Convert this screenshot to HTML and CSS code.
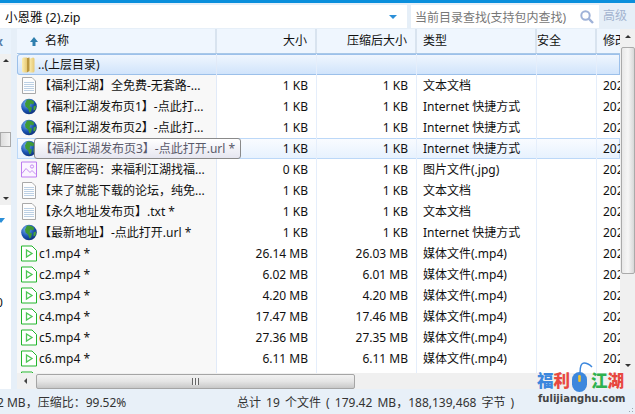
FILE: index.html
```html
<!DOCTYPE html>
<html lang="zh-CN">
<head>
  <meta charset="UTF-8" />
  <title>小恩雅 (2).zip</title>
  <link rel="stylesheet" href="styles.css">
</head>
<body>
  <svg class="defs" width="0" height="0">
    <defs>
      <linearGradient id="folderGrad" x1="0" y1="0" x2="1" y2="0">
        <stop offset="0" stop-color="#fbeeb4"/><stop offset="1" stop-color="#e6c873"/>
      </linearGradient>
      <radialGradient id="globeGrad" cx="0.35" cy="0.3" r="0.8">
        <stop offset="0" stop-color="#7db4f2"/><stop offset="0.55" stop-color="#1c56b4"/><stop offset="1" stop-color="#0b2a70"/>
      </radialGradient>
      <symbol id="i-folder" viewBox="0 0 13 16">
        <path d="M0 2 Q0 .5 1.5 .5 L5 .5 L5 15.5 L1.5 15.5 Q0 15.5 0 14 Z" fill="url(#folderGrad)"/>
        <path d="M7 2 L11 .5 Q12.5 .5 12.5 2 L12.5 14 Q12.5 15.5 11 15.5 L7 15.5 Z" fill="url(#folderGrad)"/>
        <path d="M5 1 L7.5 .5 L7.5 14 L5 15.5 Z" fill="#b9963f"/>
      </symbol>
      <symbol id="i-text" viewBox="0 0 14 17">
        <path d="M.5.5 H10 L13.5 4 V16.5 H.5 Z" fill="#fdfdfd" stroke="#a9a9a9"/>
        <path d="M2 5.5 H12 M2 7.5 H12 M2 9.5 H12 M2 11.5 H12 M2 13.5 H12" stroke="#bcd0e4"/>
      </symbol>
      <symbol id="i-globe" viewBox="0 0 16 16">
        <circle cx="8" cy="8" r="7.8" fill="url(#globeGrad)"/>
        <path d="M6 1 Q10 .5 13 3 L12.5 6 L9.5 5 L8.5 8 L11 9 L10 13 L8.5 14 L7 10 L4.5 8 L4 5 Z" fill="#3f9a35"/>
        <path d="M12.5 8 L15 7 L14.5 11 L12.5 12 Z" fill="#4aa63c"/>
      </symbol>
      <symbol id="i-image" viewBox="0 0 16 16">
        <path d="M.5.5 H15.5 V15.5 H.5 Z" fill="#fbf5ff" stroke="#bd7cf0"/>
        <path d="M1 12 L5 7 L9 11 L11 9 L15 13" fill="none" stroke="#c48cf2"/>
        <circle cx="11" cy="5" r="1.6" fill="none" stroke="#c48cf2"/>
      </symbol>
      <symbol id="i-video" viewBox="0 0 16 16">
        <path d="M.5.5 H11 L15.5 5 V15.5 H.5 Z" fill="#fff" stroke="#22b52c"/>
        <path d="M5.5 4.5 L11 8 L5.5 11.5 Z" fill="#fff" stroke="#4cc654" stroke-width="1.3"/>
      </symbol>
    </defs>
  </svg>

  <div class="window">
    <div class="topbar">
      <div class="pathbox">
        <span>小恩雅 (2).zip</span>
        <i class="caret"></i>
      </div>
      <div class="searchbox">
        <span>当前目录查找(支持包内查找)</span>
        <svg class="magnifier" width="14" height="14" viewBox="0 0 14 14">
          <circle cx="5.5" cy="5.5" r="4.2" fill="none" stroke="#9fb2d8" stroke-width="2"/>
          <path d="M8.7 8.7 L13 13" stroke="#9fb2d8" stroke-width="2.4"/>
        </svg>
      </div>
      <span class="advanced">高级</span>
    </div>

    <div class="main">
      <div class="side">
        <div class="side-head"><span class="side-x">x</span></div>
        <div class="side-scroll">
          <i class="tri-up"></i>
          <div class="side-thumb"></div>
          <i class="tri-down"></i>
        </div>
        <div class="side-tree">
          <i class="side-arrow"></i>
          <span class="zero">0</span>
        </div>
      </div>

      <div class="content">
        <div class="content-top">
          <div class="list">
            <div class="row head">
              <div class="cell name">
                <svg class="sort" width="8" height="9" viewBox="0 0 8 9"><path d="M4 0 L8 5 L5.5 5 L5.5 9 L2.5 9 L2.5 5 L0 5 Z" fill="#2f7fae"/></svg>
                名称
              </div>
              <div class="cell size">大小</div>
              <div class="cell packed">压缩后大小</div>
              <div class="cell kind">类型</div>
              <div class="cell safe">安全</div>
              <div class="cell date">修改</div>
            </div>

            <div class="row selected">
              <div class="cell name"><svg class="ico folder"><use href="#i-folder"/></svg><span>..(上层目录)</span></div>
              <div class="cell size"></div><div class="cell packed"></div><div class="cell kind"></div><div class="cell safe"></div><div class="cell date"></div>
            </div>
            <div class="row">
              <div class="cell name"><svg class="ico"><use href="#i-text"/></svg>【福利江湖】全免费-无套路-...</div>
              <div class="cell size">1 KB</div><div class="cell packed">1 KB</div><div class="cell kind">文本文档</div><div class="cell safe"></div><div class="cell date">2021</div>
            </div>
            <div class="row">
              <div class="cell name"><svg class="ico"><use href="#i-globe"/></svg>【福利江湖发布页1】-点此打...</div>
              <div class="cell size">1 KB</div><div class="cell packed">1 KB</div><div class="cell kind">Internet 快捷方式</div><div class="cell safe"></div><div class="cell date">2021</div>
            </div>
            <div class="row">
              <div class="cell name"><svg class="ico"><use href="#i-globe"/></svg>【福利江湖发布页2】-点此打...</div>
              <div class="cell size">1 KB</div><div class="cell packed">1 KB</div><div class="cell kind">Internet 快捷方式</div><div class="cell safe"></div><div class="cell date">2021</div>
            </div>
            <div class="row hover">
              <div class="cell name"><svg class="ico"><use href="#i-globe"/></svg></div>
              <div class="cell size">1 KB</div><div class="cell packed">1 KB</div><div class="cell kind">Internet 快捷方式</div><div class="cell safe"></div><div class="cell date">2021</div>
            </div>
            <div class="row">
              <div class="cell name"><svg class="ico"><use href="#i-image"/></svg>【解压密码：来福利江湖找福...</div>
              <div class="cell size">0 KB</div><div class="cell packed">1 KB</div><div class="cell kind">图片文件(.jpg)</div><div class="cell safe"></div><div class="cell date">2021</div>
            </div>
            <div class="row">
              <div class="cell name"><svg class="ico"><use href="#i-text"/></svg>【来了就能下载的论坛，纯免...</div>
              <div class="cell size">1 KB</div><div class="cell packed">1 KB</div><div class="cell kind">文本文档</div><div class="cell safe"></div><div class="cell date">2021</div>
            </div>
            <div class="row">
              <div class="cell name"><svg class="ico"><use href="#i-text"/></svg>【永久地址发布页】.txt *</div>
              <div class="cell size">1 KB</div><div class="cell packed">1 KB</div><div class="cell kind">文本文档</div><div class="cell safe"></div><div class="cell date">2021</div>
            </div>
            <div class="row">
              <div class="cell name"><svg class="ico"><use href="#i-globe"/></svg>【最新地址】-点此打开.url *</div>
              <div class="cell size">1 KB</div><div class="cell packed">1 KB</div><div class="cell kind">Internet 快捷方式</div><div class="cell safe"></div><div class="cell date">2021</div>
            </div>
            <div class="row">
              <div class="cell name"><svg class="ico"><use href="#i-video"/></svg>c1.mp4 *</div>
              <div class="cell size">26.14 MB</div><div class="cell packed">26.03 MB</div><div class="cell kind">媒体文件(.mp4)</div><div class="cell safe"></div><div class="cell date">2021</div>
            </div>
            <div class="row">
              <div class="cell name"><svg class="ico"><use href="#i-video"/></svg>c2.mp4 *</div>
              <div class="cell size">6.02 MB</div><div class="cell packed">6.01 MB</div><div class="cell kind">媒体文件(.mp4)</div><div class="cell safe"></div><div class="cell date">2021</div>
            </div>
            <div class="row">
              <div class="cell name"><svg class="ico"><use href="#i-video"/></svg>c3.mp4 *</div>
              <div class="cell size">4.20 MB</div><div class="cell packed">4.20 MB</div><div class="cell kind">媒体文件(.mp4)</div><div class="cell safe"></div><div class="cell date">2021</div>
            </div>
            <div class="row">
              <div class="cell name"><svg class="ico"><use href="#i-video"/></svg>c4.mp4 *</div>
              <div class="cell size">17.47 MB</div><div class="cell packed">17.46 MB</div><div class="cell kind">媒体文件(.mp4)</div><div class="cell safe"></div><div class="cell date">2021</div>
            </div>
            <div class="row">
              <div class="cell name"><svg class="ico"><use href="#i-video"/></svg>c5.mp4 *</div>
              <div class="cell size">27.36 MB</div><div class="cell packed">27.35 MB</div><div class="cell kind">媒体文件(.mp4)</div><div class="cell safe"></div><div class="cell date">2021</div>
            </div>
            <div class="row">
              <div class="cell name"><svg class="ico"><use href="#i-video"/></svg>c6.mp4 *</div>
              <div class="cell size">6.11 MB</div><div class="cell packed">6.11 MB</div><div class="cell kind">媒体文件(.mp4)</div><div class="cell safe"></div><div class="cell date">2021</div>
            </div>
            <div class="row">
              <div class="cell name"><svg class="ico"><use href="#i-video"/></svg></div>
              <div class="cell size"></div><div class="cell packed"></div><div class="cell kind"></div><div class="cell safe"></div><div class="cell date"></div>
            </div>
          </div>

          <div class="vscroll">
            <i class="tri-up"></i>
            <div class="vthumb"></div>
            <i class="tri-down"></i>
          </div>
        </div>

        <div class="hscroll">
          <i class="tri-left"></i>
          <div class="hthumb"><span class="grip"></span></div>
        </div>
      </div>
    </div>

    <div class="status">
      <span class="status-left">2 MB，压缩比：99.52%</span>
      <span class="status-right">总计 19 个文件 ( 179.42 MB，188,139,468 字节 )</span>
    </div>

    <div class="tooltip">【福利江湖发布页3】-点此打开.url *</div>

    <div class="watermark">
      <div class="wm-top">
        <span class="wm-blue">福</span><span class="wm-red">利</span>
        <svg class="wm-mouse" width="22" height="30" viewBox="0 0 22 30">
          <path d="M8 11 Q8 1 12 1 Q16 1 20 5" fill="none" stroke="#3c87dd" stroke-width="1.5"/>
          <rect x="0" y="10" width="15" height="20" rx="7.5" fill="#3c87dd"/>
          <rect x="6.2" y="13" width="2.6" height="7" rx="1.3" fill="#f3c52e"/>
        </svg>
        <span class="wm-green">江</span><span class="wm-red">湖</span>
      </div>
      <div class="wm-url">fulijianghu.com</div>
    </div>

    <div class="resize-grip"></div>
  </div>
</body>
</html>
```
FILE: styles.css
```css
* {
  box-sizing: border-box;
}
html, body {
  margin: 0;
  padding: 0;
}
body {
  font-family: "Noto Sans", "Noto Sans CJK SC", sans-serif;
  font-size: 12px;
  color: #111;
  overflow: hidden;
}
.defs {
  position: absolute;
}
.window {
  position: relative;
  width: 635px;
  height: 414px;
  display: flex;
  flex-direction: column;
  background: #e9f0f8;
  overflow: hidden;
}

/* top bar */
.topbar {
  height: 29px;
  flex: none;
  display: flex;
  border-top: 3px solid #0a8fdc;
  padding-top: 2px;
  padding-bottom: 1px;
  background: #e6eff8;
}
.pathbox {
  width: 407px;
  display: flex;
  align-items: center;
  justify-content: space-between;
  background: white;
  padding: 0 10px 0 5px;
  font-size: 12.5px;
}
.caret {
  width: 0;
  height: 0;
  border-left: 4px solid transparent;
  border-right: 4px solid transparent;
  border-top: 4px solid #2b8fd8;
}
.searchbox {
  width: 188px;
  margin-left: 4px;
  display: flex;
  align-items: center;
  justify-content: space-between;
  background: white;
  padding: 0 5px 0 4px;
  color: #777;
}
.magnifier {
  flex: none;
}
.advanced {
  margin-left: 4px;
  line-height: 22px;
  color: #a3b3cf;
}

/* main area */
.main {
  flex: 1;
  min-height: 0;
  display: flex;
}
.side {
  width: 11px;
  flex: none;
  display: flex;
  flex-direction: column;
  background: white;
  overflow: hidden;
}
.side-head {
  height: 25px;
  line-height: 25px;
  background: #eaf3fc;
  flex: none;
  margin-left: -4px;
  color: #5a7fa8;
  font-weight: bold;
}
.side-scroll {
  height: 151px;
  flex: none;
  display: flex;
  flex-direction: column;
  align-items: center;
  background: #f0f0f0;
  padding: 5px 0;
}
.side-thumb {
  width: 11px;
  height: 15px;
  margin-top: 70px;
  background: linear-gradient(90deg, #ddd, #f3f3f3);
  border: 1px solid #aaa;
}
.side-scroll .tri-down {
  margin-top: auto;
}
.side-tree {
  flex: 1;
  display: flex;
  flex-direction: column;
  background: white;
}
.side-arrow {
  width: 0;
  height: 0;
  margin: 13px 0 0 -3px;
  border-left: 4px solid transparent;
  border-right: 4px solid transparent;
  border-top: 5px solid #2b8fd8;
}
.zero {
  margin: 71px 0 0 -4px;
}
.content {
  flex: 1;
  min-width: 0;
  display: flex;
  flex-direction: column;
  margin-left: 6px;
  box-shadow: -6px 0 0 #e6eff8;
}
.content-top {
  flex: 1;
  min-height: 0;
  display: flex;
}
.list {
  flex: 1;
  min-width: 0;
  overflow: hidden;
  background: white;
}
.row {
  display: flex;
  height: 21px;
  line-height: 21px;
  white-space: nowrap;
}
.cell {
  height: 100%;
  flex: none;
  overflow: hidden;
  border-right: 1px solid #e5eefb;
}
.name {
  width: 200px;
  display: flex;
  align-items: center;
  background: #f8f8f8;
  padding-left: 4px;
  border-right-color: #e1eaf8;
}
.size, .packed {
  width: 100px;
  text-align: right;
  padding-right: 8px;
}
.kind {
  width: 120px;
  padding-left: 6px;
}
.safe {
  width: 60px;
}
.date {
  width: 23px;
  padding-left: 6px;
  border-right: 0;
}
.ico {
  width: 16px;
  height: 17px;
  margin-right: 2px;
  flex: none;
}
.ico.folder {
  width: 13px;
  height: 16px;
  margin: 0 3px 0 1px;
}

/* header row */
.row.head {
  height: 25px;
  line-height: 24px;
  background: #eff6fe;
  border-bottom: 1px solid #a8c8e8;
}
.head .cell {
  background: transparent;
  border-right: 2px solid #d8e3ef;
}
.head .name {
  padding-left: 13px;
}
.head .date {
  border-right: 0;
}
.sort {
  margin-right: 7px;
  flex: none;
}

/* highlighted rows */
.row.selected {
  background: linear-gradient(#f1f7fe, #cfe3fb);
  box-shadow: inset 0 0 0 1px #9cc0ea;
  border-radius: 3px 0 0 3px;
}
.row.selected .cell {
  background: transparent;
}
.row.hover {
  background: linear-gradient(#fafcff, #e6f1fe);
  box-shadow: inset 0 0 0 1px #bcd8f8;
}
.row.hover .cell {
  background: transparent;
}

/* scrollbars */
.vscroll {
  width: 15px;
  flex: none;
  display: flex;
  flex-direction: column;
  align-items: center;
  background: #f0f0f0;
  padding-top: 6px;
  padding-bottom: 6px;
}
.vthumb {
  width: 14px;
  height: 227px;
  margin-top: 9px;
  background: linear-gradient(90deg, #e8e8e8, #f6f6f6 50%, #d8d8d8);
  border: 1px solid #aaa;
  border-radius: 2px;
}
.vscroll .tri-down {
  margin-top: auto;
}
.tri-up, .tri-down, .tri-left {
  width: 0;
  height: 0;
  flex: none;
  display: block;
  border: 3px solid transparent;
}
.tri-up {
  border-top: 0;
  border-bottom-color: #333;
}
.tri-down {
  border-bottom: 0;
  border-top-color: #333;
}
.tri-left {
  border-left: 0;
  border-right-color: #444;
}
.hscroll {
  height: 16px;
  flex: none;
  display: flex;
  align-items: center;
  background: #f0f0f0;
  padding-left: 7px;
}
.hthumb {
  width: 319px;
  height: 15px;
  margin-left: 9px;
  display: flex;
  align-items: center;
  justify-content: center;
  background: linear-gradient(#f2f2f2, #e4e4e4 50%, #c8c8c8);
  border: 1px solid #a5a5a5;
  border-radius: 2px;
}
.grip {
  width: 7px;
  height: 7px;
  background: repeating-linear-gradient(90deg, #666 0 1px, #eee 1px 3px);
}

/* status bar */
.status {
  height: 25px;
  flex: none;
  display: flex;
  align-items: center;
  background: #e8f0f8;
  color: #333;
  white-space: nowrap;
}
.status-left {
  margin-left: -3px;
  width: 240px;
}
.status-right {
  word-spacing: 2px;
}
.resize-grip {
  position: absolute;
  right: 0;
  bottom: 0;
  width: 10px;
  height: 10px;
  background: radial-gradient(circle, #9aa5b0 0 1px, transparent 1px) 0 0 / 3px 3px;
  clip-path: polygon(100% 0, 100% 100%, 0 100%);
}

/* tooltip over the hovered row */
.tooltip {
  position: absolute;
  left: 34px;
  top: 138px;
  width: 207px;
  height: 21px;
  line-height: 19px;
  padding-left: 5px;
  white-space: nowrap;
  color: #5a5a6a;
  background: linear-gradient(#fff, #e6e6f0);
  border: 1px solid #8a8a8a;
  border-radius: 3px;
}

/* watermark */
.watermark {
  position: absolute;
  left: 537px;
  top: 362px;
  width: 98px;
  font-family: "Noto Sans CJK SC", sans-serif;
  font-weight: 900;
}
.wm-top {
  display: flex;
  align-items: flex-start;
  height: 30px;
  font-size: 16.5px;
  line-height: 17px;
}
.wm-top span {
  margin-top: 10px;
}
.wm-mouse {
  margin: 0 -3px 0 2px;
  flex: none;
}
.wm-url {
  font-family: "DejaVu Sans", sans-serif;
  font-size: 10px;
  font-weight: bold;
  line-height: 14px;
  margin-left: 1px;
  color: #444;
  white-space: nowrap;
}
.wm-blue { color: #3c87dd; }
.wm-red { color: #e8483f; }
.wm-green { color: #2fb14e; }
```
